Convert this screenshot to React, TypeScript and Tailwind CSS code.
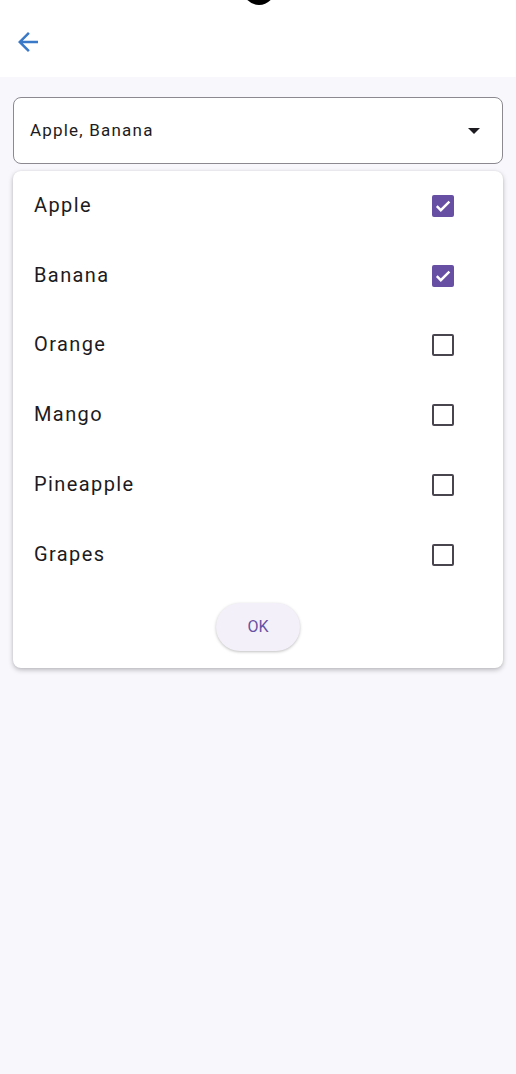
import React from "react";

const items = [
  { label: "Apple", checked: true },
  { label: "Banana", checked: true },
  { label: "Orange", checked: false },
  { label: "Mango", checked: false },
  { label: "Pineapple", checked: false },
  { label: "Grapes", checked: false },
];

function Check({ checked }: { checked: boolean }) {
  if (checked) {
    return (
      <div className="w-[22px] h-[22px] rounded-[2px] bg-[#6750a4] flex items-center justify-center">
        <svg width="22" height="22" viewBox="0 0 22 22">
          <path d="M4.8 11.2l4 4L17.4 6.6" fill="none" stroke="#ffffff" strokeWidth="2.4" />
        </svg>
      </div>
    );
  }
  return <div className="w-[22px] h-[22px] rounded-[2px] border-2 border-[#49454f] bg-white" />;
}

export default function App() {
  return (
    <div className="w-[516px] h-[1074px] bg-[#f8f7fc] relative overflow-hidden" style={{ fontFamily: "Roboto, 'Noto Sans', sans-serif" }}>
      <div className="h-[77px] bg-white relative">
        <svg className="absolute left-[13px] top-[27px]" width="30" height="30" viewBox="0 0 24 24">
          <path d="M20 11H7.83l5.59-5.59L12 4l-8 8 8 8 1.41-1.41L7.83 13H20v-2z" fill="#3a78c8" />
        </svg>
      </div>
      <div className="absolute z-10 w-[32px] h-[32px] rounded-full bg-black left-[243px] top-[-27px]" />
      <div className="px-[13px] pt-[20px]">
        <div className="h-[67px] bg-white border border-[#8c8a90] rounded-[8px] flex items-center justify-between pl-[16px] pr-[22px]">
          <span className="text-[17px] text-[#1d1b20] tracking-[1.2px]">Apple, Banana</span>
          <svg width="12" height="6" viewBox="0 0 12 6">
            <path d="M0 0h12L6 6z" fill="#1d1b20" />
          </svg>
        </div>
        <div className="mt-[7px] bg-white rounded-[8px] shadow-[0_2px_5px_rgba(0,0,0,0.25),0_0_2px_rgba(0,0,0,0.08)] pb-[17px]">
          {items.map((it) => (
            <div key={it.label} className="h-[69.8px] flex items-center justify-between pl-[21px] pr-[49px]">
              <span className="text-[20px] text-[#1d1b20] tracking-[1.4px] -mt-[2px]">{it.label}</span>
              <Check checked={it.checked} />
            </div>
          ))}
          <div className="flex justify-center mt-[13px]">
            <div className="w-[84px] h-[48px] rounded-full bg-[#f4f0f9] shadow-[0_1px_3px_rgba(0,0,0,0.25)] flex items-center justify-center text-[#6750a4] text-[16px]">
              OK
            </div>
          </div>
        </div>
      </div>
    </div>
  );
}
